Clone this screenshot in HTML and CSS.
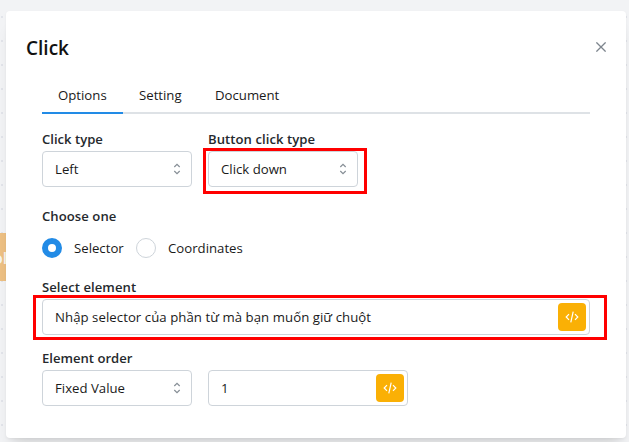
FILE: index.html
```html
<!DOCTYPE html>
<html lang="vi">
<head>
<meta charset="utf-8">
<title>Click</title>
<link rel="stylesheet" href="styles.css">
</head>
<body>
<svg class="defs" width="0" height="0" aria-hidden="true">
  <symbol id="chevrons" viewBox="0 0 8 12"><path d="M1.3 4 4 1.3 6.7 4M1.3 8 4 10.7 6.7 8"/></symbol>
  <symbol id="code" viewBox="0 0 14 12"><path d="M4 3.2 1.2 6 4 8.8M10 3.2 12.8 6 10 8.8M8.2 .7 5.8 11.3"/></symbol>
</svg>
<div class="node">ol</div>
<main class="modal">
  <header class="header">
    <h1>Click</h1>
    <button class="close" aria-label="Close"><svg width="10" height="10" viewBox="0 0 10 10"><path d="M.4.4l9.2 9.2M9.6.4.4 9.6"/></svg></button>
  </header>
  <nav class="tabs">
    <a class="tab active">Options</a>
    <a class="tab setting">Setting</a>
    <a class="tab document">Document</a>
  </nav>
  <div class="row">
    <div class="field">
      <label>Click type</label>
      <div class="control">Left<svg class="chevrons"><use href="#chevrons"/></svg></div>
    </div>
    <div class="field">
      <label class="spaced">Button click type</label>
      <div class="control marked">Click down<svg class="chevrons"><use href="#chevrons"/></svg></div>
    </div>
  </div>
  <div class="choice">
    <label class="spaced">Choose one</label>
    <div class="radios">
      <i class="radio checked"></i><span class="first">Selector</span>
      <i class="radio"></i><span>Coordinates</span>
    </div>
  </div>
  <div class="field element">
    <label class="spaced">Select element</label>
    <div class="control marked wide"><span class="hint">Nhập selector của phần từ mà bạn muốn giữ chuột</span><b class="code"><svg><use href="#code"/></svg></b></div>
  </div>
  <div class="row order">
    <div class="field">
      <label>Element order</label>
      <div class="control">Fixed Value<svg class="chevrons"><use href="#chevrons"/></svg></div>
    </div>
    <div class="field value">
      <div class="control">1<b class="code"><svg><use href="#code"/></svg></b></div>
    </div>
  </div>
</main>
</body>
</html>
```
FILE: styles.css
```css
* { box-sizing: border-box; }
body {
  margin: 0;
  width: 629px;
  height: 442px;
  padding: 11px 3px 4px 6px;
  overflow: hidden;
  position: relative;
  font: 13.2px/20px "Open Sans", "Noto Sans", sans-serif;
  color: #1a1a1a;
  background: radial-gradient(circle at 2px 17px, #e2e4ea 1px, transparent 1.5px) 0 0 / 24px 24px, #f2f3f5;
}
.defs { position: absolute; }
.node {
  position: absolute;
  left: -30px;
  top: 233px;
  width: 60px;
  height: 48px;
  padding: 15px 0 0 23px;
  background: #edc083;
  color: #f6f4f1;
  font-size: 16px;
  font-weight: 600;
}
.modal {
  position: relative;
  height: 427px;
  padding: 0 36px;
  border-radius: 4px;
  background: #fff;
  box-shadow: 0 1px 3px rgba(0,0,0,.05), 0 14px 14px -6px rgba(0,0,0,.12);
}
.header {
  display: flex;
  justify-content: space-between;
  align-items: center;
  height: 69px;
  margin: 0 -17px 0 -16px;
  padding-top: 4px;
}
h1 { margin: 0; color: #111; font-size: 19px; font-weight: 600; line-height: 28px; letter-spacing: 0; }
.close { display: flex; margin: 0 1px 2px 0; padding: 0; border: 0; background: none; }
.close svg { fill: none; stroke: #7d858d; stroke-width: 1.3; }
.tabs { display: flex; height: 34px; border-bottom: 2px solid #dee2e6; }
.tab { height: 34px; padding: 5px 16px 0; border-bottom: 2px solid transparent; }
.active { width: 81px; border-color: #228be6; }
.setting { width: 76px; }
.row { display: flex; gap: 16px; margin-top: 15px; }
.field { width: 150px; }
label { display: block; height: 22px; font-weight: 600; color: #25292d; font-size: 13.1px; white-space: nowrap; }
.spaced { letter-spacing: .06px; }
.control {
  position: relative;
  display: flex;
  justify-content: space-between;
  align-items: center;
  height: 36px;
  padding: 0 10px 0 12px;
  border: 1px solid #ced4da;
  border-radius: 4px;
}
.chevrons { width: 8px; height: 12px; fill: none; stroke: #868e96; stroke-width: 1.2; }
.marked::after { content: ""; position: absolute; inset: -4px -10px -8px -6px; border: 3px solid #f00; }
.wide.marked::after { inset: -5px -18px -6px -10px; }
.choice { margin-top: 19px; }
.radios { display: flex; align-items: center; height: 20px; }
.choice label { height: 32px; }
.radio { width: 20px; height: 20px; margin-right: 12px; border: 1px solid #ced4da; border-radius: 50%; }
.radio + span { margin-right: 12px; }
.radio + .first { width: 50px; }
.checked { border: 6px solid #228be6; }
.element { width: 548px; margin-top: 19px; }
.hint { letter-spacing: .055px; }
.element .control, .value .control { padding-right: 3px; }
.order { margin-top: 13px; align-items: flex-end; }
.value { width: 200px; }
.code { display: flex; align-items: center; justify-content: center; width: 28px; height: 28px; border-radius: 4px; background: #fab005; }
.code svg { width: 14px; height: 12px; fill: none; stroke: #fff; stroke-width: 1.2; }
```
